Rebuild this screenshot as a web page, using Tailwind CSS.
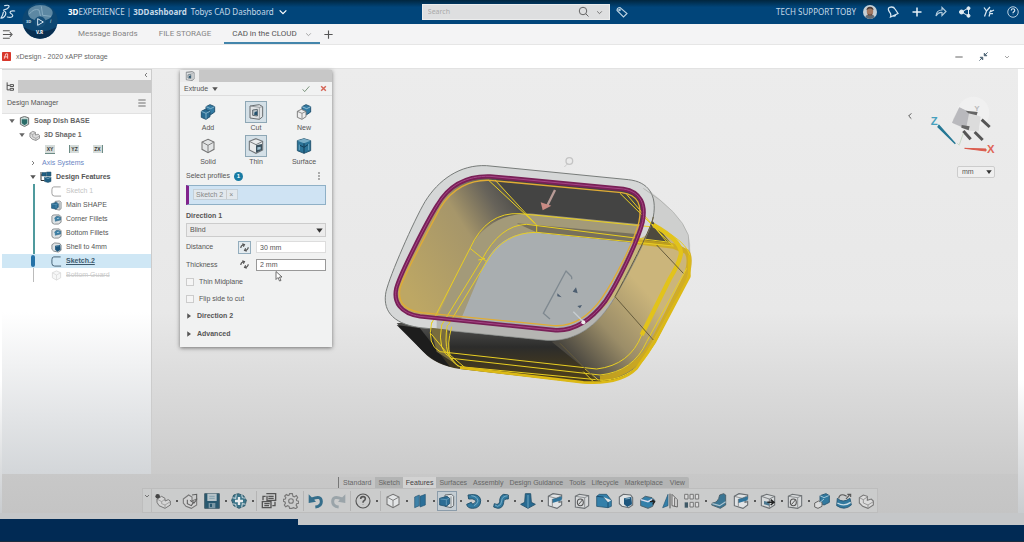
<!DOCTYPE html>
<html lang="en">
<head>
  <meta charset="UTF-8" />
  <meta name="viewport" content="width=device-width, initial-scale=1.0"/>
  <title>3DDashboard - CAD in the CLOUD</title>
  <script src="https://cdn.jsdelivr.net/npm/@tailwindcss/browser@4"></script>
</head>
<body class="min-h-screen flex flex-col overflow-hidden bg-white font-['Liberation_Sans',Arial,sans-serif] text-[7px] leading-[10px] text-[#555]">

  <!-- Icon sprite -->
  <svg class="hidden" fill="none" stroke-linejoin="round" stroke-linecap="round">
    <symbol id="cube" viewBox="0 0 24 24"><path d="M12 2l9 4v11l-9 5-9-5V6z" fill="#e3e5e6" stroke="#777" stroke-width="1.6"/><path d="M3 6l9 5 9-5M12 11v11" stroke="#777" stroke-width="1.4"/></symbol>
    <symbol id="cube-blue" viewBox="0 0 24 24"><path d="M12 1l10 3v15l-10 4-10-4V4z" fill="#2b7397" stroke="#23536e" stroke-width="1.4"/><path d="M2 4l10 4 10-4-10-3z" fill="#79aec7"/><path d="M12 8v15M12 14l-6-3M12 14l6-4" stroke="#123e58" stroke-width="1.5"/><path d="M5 10v8M19 9v9" stroke="#6aa5c1" stroke-width="1.5"/></symbol>
    <symbol id="add" viewBox="0 0 24 24"><path d="M9 4l6-3 7 3v8l-6 4-7-3z" fill="#327ba3" stroke="#1f4f6d" stroke-width="1.4"/><path d="M2 11l6-3 7 3v8l-6 4-7-3z" fill="#286b92" stroke="#1f4f6d" stroke-width="1.4"/><path d="M2 11l7 3 6-3M9 14v8M9 4l7 3 6-3" stroke="#8dbad0" stroke-width="1.3"/></symbol>
    <symbol id="cut" viewBox="0 0 24 24"><path d="M3 3l14-2 5 3v15l-5 4-14-2z" fill="#e0e3e5" stroke="#686d70" stroke-width="1.5"/><path d="M17 5v18M17 5l5-1M17 5L3 3" stroke="#888d90" stroke-width="1.2"/><path d="M7 9l7-1v10l-7-1z" fill="#b9c4ca" stroke="#4f5a60" stroke-width="1.3"/><path d="M10 12l4-1v6l-5-1z" fill="#24526f"/></symbol>
    <symbol id="new" viewBox="0 0 24 24"><path d="M9 4l6-3 7 3v8l-6 4-7-3z" fill="#327ba3" stroke="#1f4f6d" stroke-width="1.4"/><path d="M9 4l7 3 6-3" stroke="#b1d2e2" stroke-width="1.2"/><path d="M2 11l6-3 7 3v8l-6 4-7-3z" fill="#eee" stroke="#777" stroke-width="1.4"/><path d="M2 11l7 3 6-3M9 14v8" stroke="#777" stroke-width="1.2"/></symbol>
    <symbol id="thin" viewBox="0 0 24 24"><path d="M12 1l10 4v13l-10 5-10-5V5z" fill="#e8eaeb" stroke="#707477" stroke-width="1.6"/><path d="M2 5l10 5 10-5" stroke="#707477" stroke-width="1.4"/><path d="M12 11l9-2v9l-9 4z" fill="#3b515e"/><path d="M14 14l5-1v4l-5 1z" fill="#9fc0d0"/></symbol>
    <symbol id="fillet" viewBox="0 0 24 24"><path d="M2 5q1-3 5-3h11l4 4v12l-6 4H7q-5-1-5-5z" fill="#dfe2e4" stroke="#666c70" stroke-width="1.6"/><path d="M8 9q2-5 8-4l5 2v6l-12 3z" fill="#3b7fa6" stroke="#285875"/><path d="M8 10v11M13 10l5-1" stroke="#d5e7ef" stroke-width="1.5"/></symbol>
    <symbol id="shell" viewBox="0 0 24 24"><path d="M2 6l6-4 11 1 3 4v11l-6 4-10-2-4-4z" fill="#dfe3e5" stroke="#666c70" stroke-width="1.6"/><path d="M9 8l11-2 1 11-7 4-5-4z" fill="#1d567d"/><path d="M11 9l7-1" stroke="#81adc4" stroke-width="1.5"/></symbol>
    <symbol id="extrude" viewBox="0 0 24 24"><path d="M9 3l10-1 3 3v14l-4 3-9-2z" fill="#dfe3e5" stroke="#666c70" stroke-width="1.5"/><path d="M18 5v16" stroke="#666c70"/><path d="M1 8l11-3 4 3v8l-5 4-10-2z" fill="#2b6d95" stroke="#204f6c" stroke-width="1.2"/><path d="M2 9l9 1 4-2M11 10v8" stroke="#79abc5"/></symbol>
    <symbol id="sketch" viewBox="0 0 24 24"><path d="M21 2H6Q2 2 2 8v8q0 6 6 6h14" stroke="currentColor" stroke-width="2"/></symbol>
    <symbol id="part" viewBox="0 0 24 24"><path d="M2 7l6-4 6 2v6l6-2 3 3v6l-8 5-8-3-5-5z" fill="#dcdcdc" stroke="#777" stroke-width="1.6"/><path d="M2 7l6 3 6-4M8 10v5l7 3 8-5M15 18v4" stroke="#888" stroke-width="1.2"/></symbol>
    <symbol id="part-new" viewBox="0 0 24 24"><path d="M3 9l7-4 5 3v4l5-2 3 2v6l-8 5-9-4-3-5z" fill="#d5d5d5" stroke="#777" stroke-width="1.5"/><path d="M3 9l7 4 5-4M10 13v3l5 2 8-5M15 18v4" stroke="#888"/><circle cx="4" cy="5" r="3.4" fill="#444"/></symbol>
    <symbol id="part-open" viewBox="0 0 24 24"><path d="M2 9l8-6 5 3v6l7-3v9l-8 5-8-3-4-5z" fill="#d3d3d3" stroke="#777" stroke-width="1.6"/><path d="M15 3l7-1v8l-4 5-6-4M8 10v6l6 3 4-6" stroke="#5f5f5f" stroke-width="1.6"/></symbol>
    <symbol id="save" viewBox="0 0 24 24"><path d="M1 1h22v22H1z" fill="#28586f" stroke="#46606d" stroke-width="1.5"/><path d="M5 1h14v11H5z" fill="#b7c3c8"/><path d="M8 5h8M8 8h8" stroke="#6890a2"/><path d="M7 15h10v8H7z" fill="#7996a4"/><path d="M9 16h3v5H9z" fill="#28586f"/></symbol>
    <symbol id="update" viewBox="0 0 24 24"><path d="M4 3l7-2 8 3 4 7-2 8-9 4-8-4-3-8z" fill="#3b7488" stroke="#315a6b" stroke-width="1.4"/><path d="M12 6v12M6 12h12" stroke="#e5eaec" stroke-width="3.5"/><path d="M2 7l5 1 1-6M22 8l-5-1-1-5M22 17l-5-1-1 6M2 16l5 1 1 5" stroke="#c5d2d8" stroke-width="1.6"/></symbol>
    <symbol id="swap" viewBox="0 0 24 24"><path d="M8 1h14v10H9V4M2 13h13v9H2z" stroke="#555" stroke-width="2"/><path d="M11 5h8M11 8h8M5 16h8M5 19h7M3 11V5h4M21 13v6h-4" stroke="#555" stroke-width="2"/></symbol>
    <symbol id="gear" viewBox="0 0 24 24"><path d="M10 1h4l1 4 2 .800 3-2 2 3-2 3 .500 1.700 3 1v3l-3 .700-.800 2 1.800 3-2.500 2.300-3-1.600-2 .800L13 23h-3l-1-3-2-.900-3 1.700L2 18l1.700-2.700L3 13.500l-2.500-1V9.500L3.500 9l.8-2L2.500 4.500 5 2.300l2.500 1.600L9.300 3z" stroke="#777" stroke-width="1.700"/><circle cx="12" cy="12" r="3.500" stroke="#777" stroke-width="1.600"/></symbol>
    <symbol id="undo" viewBox="0 0 24 24"><path d="M6 9q14-6 14 4 0 7-9 8" stroke="currentColor" stroke-width="4.500" stroke-linecap="butt"/><path d="M1 2l0 13 11-2z" fill="currentColor"/></symbol>
    <symbol id="help" viewBox="0 0 24 24"><circle cx="12" cy="12" r="10.500" stroke="currentColor" stroke-width="1.700"/><path d="M8.500 9q0-3.500 3.500-3.500t3.500 3.200q0 2-2 3-1.500.8-1.500 2.800M12 17.500v.6" stroke="currentColor" stroke-width="2.400"/></symbol>
    <symbol id="plane" viewBox="0 0 24 24"><path d="M4 6l7-3v16l-7 3z" fill="#3f82a8" stroke="#285875"/><path d="M12 5l8-3v16l-8 3z" fill="#2b6f98" stroke="#285875"/></symbol>
    <symbol id="revolve" viewBox="0 0 24 24"><path d="M3 3q18-3 19 8 0 12-12 12-8 0-9-6l7-3q1 4 4 2 5-4 1-6-3-2-9-1z" fill="#31799f" stroke="#204f69" stroke-width="1.400"/><path d="M8 4q9 1 10 8-1 5-6 7" stroke="#83b4cb" stroke-width="1.300"/></symbol>
    <symbol id="sweep" viewBox="0 0 24 24"><path d="M2 16q7 3 8-3 0-9 6-11l7 1v6q-7-1-7 5-1 9-9 9l-6-2z" fill="#31799f" stroke="#204f69" stroke-width="1.400"/><path d="M3 18l4 2q6-2 6-8 0-7 9-8" stroke="#83b4cb" stroke-width="1.200"/></symbol>
    <symbol id="loft" viewBox="0 0 24 24"><path d="M8 1h8l1 13 6 3-11 6-11-6 6-3z" fill="#286b92" stroke="#204f69" stroke-width="1.300"/><path d="M12 3v19" stroke="#5c98b6" stroke-width="2"/></symbol>
    <symbol id="cutout" viewBox="0 0 24 24"><path d="M2 5l7-4 13 2v5l-4 3v3l4-1v5l-7 5-13-4z" fill="#e0e3e5" stroke="#666c70" stroke-width="1.600"/><path d="M8 9l14-4v6l-14 4z" fill="#2e749c"/><path d="M2 5l12 3 8-4M8 9v11" stroke="#666"/></symbol>
    <symbol id="hole" viewBox="0 0 24 24"><path d="M2 5l6-3 14 2v15l-6 4-14-2z" fill="#d7d9da" stroke="#6d7174" stroke-width="1.600"/><path d="M2 5l14 2v15M16 7l6-3" stroke="#6d7174"/><ellipse cx="9.500" cy="14" rx="4.500" ry="5" stroke="#555" stroke-width="1.600"/><path d="M7 17l6-7" stroke="#555" stroke-width="1.500"/></symbol>
    <symbol id="chamfer" viewBox="0 0 24 24"><path d="M1 5l4-3h11l7 9v9l-5 2-17-2z" fill="#3480aa" stroke="#275672" stroke-width="1.200"/><path d="M1 5l10 1 7 8v8" stroke="#18486a" stroke-width="1.400"/><path d="M11 6l12 5-5 3z" fill="#e0e5e8"/></symbol>
    <symbol id="draft" viewBox="0 0 24 24"><path d="M1 10l7-5 10 2 4 4-3 9-7 3-11-4z" fill="#3480aa" stroke="#4b5c66" stroke-width="1.400"/><path d="M1 10l11 3 7-4" stroke="#dde" stroke-width="2"/><path d="M15 13h6m-3-3l4 3-3 4" stroke="#222" stroke-width="2"/></symbol>
    <symbol id="arrow-cube" viewBox="0 0 24 24"><path d="M2 5l8-3 12 3v13l-8 5-12-4z" fill="#d7dadb" stroke="#6d7174" stroke-width="1.600"/><path d="M2 5l12 4 8-4M14 9v13" stroke="#6d7174" stroke-width="1.300"/><path d="M6 12l8 2v5l-8-2z" fill="#4c7890"/><path d="M11 14h9m-4-4l5 4-5 4" stroke="#222" stroke-width="2.200"/></symbol>
    <symbol id="mirror" viewBox="0 0 24 24"><path d="M9 2v17l-8 3z" fill="#3480aa" stroke="#285875"/><path d="M12 1v22" stroke="#555" stroke-width="1.500"/><path d="M15 2l8 8v11l-8-2zM19 7v13" fill="#ddd" stroke="#666" stroke-width="1.500"/></symbol>
    <symbol id="pattern" viewBox="0 0 24 24"><path d="M1 2h5v7H1zM9 2h5v7H9zM17 2h5v7h-5zM9 14h5v7H9zM17 14h5v7h-5z" fill="#ddd" stroke="#777" stroke-width="1.500"/><path d="M1 14h5v8H1z" fill="#3f5967"/></symbol>
    <symbol id="rib" viewBox="0 0 24 24"><path d="M13 3l6-2 3 2v15l-8 5-13-5 1-3q9 0 11-12z" fill="#3a7593" stroke="#49606c" stroke-width="1.400"/><path d="M2 16l11 3 9-6" stroke="#adc4cf" stroke-width="1.800"/></symbol>
    <symbol id="scale" viewBox="0 0 24 24"><path d="M9 4l9-3 5 3v10l-8 4-6-3z" fill="#31799f" stroke="#275672" stroke-width="1.400"/><path d="M1 15l6-3 5 2v6l-6 3-5-2z" fill="#ddd" stroke="#666" stroke-width="1.500"/><path d="M9 4l6 3 7-3M8 15l7-6" stroke="#9fc4d5" stroke-width="1.500"/></symbol>
    <symbol id="deform" viewBox="0 0 24 24"><path d="M2 8q8 8 19 0l2 10q-10 9-22 1z" fill="#31799f" stroke="#275672" stroke-width="1.300"/><path d="M2 15q10 6 20-1" stroke="#c8dce5" stroke-width="2"/><path d="M4 8q1-7 8-5l4 2M15 9l6-7M17 2h5v4" stroke="#555" stroke-width="1.700"/></symbol>
    <symbol id="flip" viewBox="0 0 24 24"><path d="M2 13q0-6 8-9M6 2l6 2-3 6M22 11q0 6-8 9M18 22l-6-2 3-6" stroke="#555" stroke-width="3"/></symbol>
    <symbol id="chevron" viewBox="0 0 24 24"><path d="M4 8l8 8 8-8" stroke="currentColor" stroke-width="3"/></symbol>
    <symbol id="tri" viewBox="0 0 24 24"><path d="M1 5h22l-11 15z" fill="currentColor"/></symbol>
  </svg>

  <!-- Top bar -->
  <header class="relative z-10 h-6 shrink-0 flex items-center bg-linear-to-b from-[#01263f] via-[#01457a] via-30% to-[#01457a] text-[#c6d9e8] font-['Noto_Sans',sans-serif]">
    <svg class="absolute left-0 top-1 w-4 h-4" viewBox="0 0 48 48" fill="none" stroke="#d7e6f1" stroke-width="3.500" stroke-linecap="round"><path d="M14 5q17-4 12 5-4 6-15 8M11 20q12 5 2 18-4 5-10 4 6-9 7-17M44 21q-13-2-14 4 0 3 6 6 5 4-1 8-4 2-13 0"/></svg>
    <button aria-label="Compass" class="absolute left-[22px] top-[3px] w-9 h-9">
      <svg class="w-9 h-9" viewBox="0 0 108 108"><circle cx="54" cy="54" r="53" fill="#0d4772"/><path d="M5 72q49 28 98 0-14 35-49 35T5 72z" fill="#092f51"/><ellipse cx="55" cy="30" rx="37" ry="24" fill="#5d88a3"/><path d="M22 33q14-18 29-12l5 20-10 14M58 10l4 27 25 3" stroke="#86abc1" stroke-width="3" fill="none"/><circle cx="54" cy="57" r="17" fill="#164f79"/><path d="M47 47v20l17-10z" fill="#164f79" stroke="#d7e6f1" stroke-width="3"/><text x="12" y="60" font-size="12" font-weight="bold" fill="#cfe0ec">3D</text><text x="84" y="60" font-size="14" fill="#cfe0ec" font-style="italic">i</text><text x="42" y="94" font-size="14" font-weight="bold" fill="#fff">V.R</text></svg>
    </button>
    <div class="ml-[68px] flex items-center text-[8px] whitespace-pre"><b class="text-white">3D</b><span>EXPERIENCE | </span><b>3DDashboard</b><span class="ml-1">Tobys CAD Dashboard</span></div>
    <svg class="ml-1 w-[10px] h-[10px] text-white" fill="none"><use href="#chevron"/></svg>
    <form class="absolute left-[41%] w-[188px] h-4 ml-[2px] flex items-center bg-[#dedfe0] border border-[#eceded]">
      <input type="text" aria-label="Search" placeholder="Search" class="flex-1 min-w-0 px-[5px] text-[7px] placeholder:text-[#aaa] outline-none" />
      <button type="button" aria-label="Run search"><svg class="w-3 h-3" viewBox="0 0 24 24" fill="none" stroke="#666" stroke-width="2"><circle cx="10" cy="10" r="7.500"/><path d="M15.500 15.500L21 21"/></svg></button>
      <svg class="w-[7px] h-[7px] mx-[6px] text-[#666]" fill="none"><use href="#chevron"/></svg>
    </form>
    <svg class="absolute left-[60%] ml-[2px] w-3 h-3" viewBox="0 0 24 24" fill="none" stroke="#bcd3e2" stroke-width="2.200"><path d="M2 9q0-6 6-6l14 12-7 7z"/><circle cx="7" cy="8" r="1.500"/></svg>
    <div class="ml-auto flex items-center pr-[5px]">
      <span class="text-[8px] mr-[7px] font-['Noto_Sans']">TECH SUPPORT TOBY</span>
      <svg class="w-[14px] h-[14px] mr-[10px]" viewBox="0 0 24 24"><circle cx="12" cy="12" r="12" fill="#c5cfd5"/><path d="M4 21q1-5 8-5t8 5q-8 6-16 0z" fill="#616b75"/><ellipse cx="12" cy="11" rx="5.500" ry="7" fill="#a17862"/><path d="M6 9q0-6 6-6t6 6q-3-3-6-3T6 9z" fill="#4e3d38"/><path d="M8 14q4 5 8 0l-1 4H9z" fill="#63483d"/></svg>
      <div class="flex items-center gap-3">
        <button aria-label="Notifications"><svg class="w-3 h-3" viewBox="0 0 24 24" fill="none" stroke="#d7e6f1" stroke-width="2.500"><path d="M4 3q9-3 12 3l6 9-15 7q2-6-2-10-4-5-1-9zM13 21l5-2"/></svg></button>
        <button aria-label="Add"><svg class="w-3 h-3" viewBox="0 0 24 24" stroke="#e8f1f7" stroke-width="3"><path d="M12 3v18M3 12h18"/></svg></button>
        <button aria-label="Share"><svg class="w-3 h-3" viewBox="0 0 24 24" fill="none" stroke="#b3ccdd" stroke-width="2.300"><path d="M2 20q1-12 12-12V3l8 8-8 8v-6Q7 12 2 20z"/></svg></button>
        <button aria-label="Collaborate"><svg class="w-3 h-3" viewBox="0 0 24 24" fill="#e3edf4" stroke="#e3edf4" stroke-width="2"><path d="M5 12L19 4M5 12l14 8M19 4v16"/><circle cx="5" cy="12" r="4"/><circle cx="19" cy="4.500" r="3"/><circle cx="19" cy="19.500" r="3"/></svg></button>
        <button aria-label="Tools"><svg class="w-3 h-3" viewBox="0 0 24 24" fill="none" stroke="#d7e6f1" stroke-width="2.500"><path d="M2 3l5 7 7-8M7 10L3 21M12 21l4-13M12 13l10-5M15 15h5"/></svg></button>
        <button aria-label="Help"><svg class="w-3 h-3 text-[#d7e6f1]" fill="none"><use href="#help"/></svg></button>
      </div>
    </div>
  </header>

  <!-- Dashboard tabs -->
  <nav class="h-[21px] shrink-0 flex items-stretch bg-[#f4f4f5] border-b border-[#e6e6e6] font-[Roboto] text-[8px] text-[#858585]">
    <button aria-label="Open menu" class="w-[70px] pl-[2px] text-left"><svg class="w-[11px] h-[11px]" viewBox="0 0 24 24" fill="none" stroke="#555" stroke-width="2.300"><path d="M2 4h15M2 12h18M2 20h15M17 7l5 5-5 5"/></svg></button>
    <div class="flex gap-[5px]">
      <a href="#" class="flex items-center px-2 border-y-2 border-transparent">Message Boards</a>
      <a href="#" class="flex items-center px-2 border-y-2 border-transparent">FILE STORAGE</a>
      <a href="#" class="flex items-center px-2 border-y-2 border-t-transparent border-b-[#4385ab] text-[#555]">CAD in the CLOUD<svg class="w-[7px] h-[7px] ml-[8px] text-[#999]" fill="none"><use href="#chevron"/></svg></a>
    </div>
    <button aria-label="New tab" class="ml-[4px]"><svg class="w-[9px] h-[9px]" viewBox="0 0 24 24" stroke="#555" stroke-width="3"><path d="M12 1v22M1 12h22"/></svg></button>
  </nav>

  <!-- Widget title -->
  <div class="h-6 shrink-0 flex items-center px-[2px] bg-white border-b border-[#e2e2e2]">
    <svg class="w-[9px] h-[9px]" viewBox="0 0 24 24"><rect width="24" height="24" rx="2" fill="#d8372b"/><path d="M6 18L10 5h5v13M5 13h11" stroke="#fbd2cd" stroke-width="2.500" fill="none"/></svg>
    <h1 class="ml-[5px] text-[#666]">xDesign - 2020 xAPP storage</h1>
    <div class="ml-auto mr-3 flex items-center gap-4 text-[#888]">
      <button aria-label="Minimize"><svg class="w-2 h-2" viewBox="0 0 24 24" stroke="#666" stroke-width="3"><path d="M1 12h22"/></svg></button>
      <button aria-label="Restore"><svg class="w-[9px] h-[9px]" viewBox="0 0 24 24" stroke="#4c6273" stroke-width="2.500" fill="#4c6273"><path d="M23 1l-7 7M14 3v7h7zM1 23l7-7M3 14h7v7z"/></svg></button>
      <button aria-label="Widget menu"><svg class="w-[6px] h-[6px]" fill="none"><use href="#chevron"/></svg></button>
    </div>
  </div>

  <div class="flex-1 flex flex-col pl-[2px] pr-[6px] bg-linear-to-b from-white from-70% to-[#c9cccf]">
    <div class="flex-1 flex">

      <!-- Design Manager -->
      <aside class="w-[150px] shrink-0 flex flex-col border-r border-[#ccc] bg-linear-to-b from-white from-60% to-[#d3d6d9]">
        <div class="h-[11px] flex items-center justify-end pr-[2px] bg-[#f3f3f3] border-t border-[#d5d5d5]"><button aria-label="Collapse panel"><svg class="w-[6px] h-[6px] rotate-90" fill="none"><use href="#chevron"/></svg></button></div>
        <div class="h-[13px] flex bg-[#c9c9c9]"><div class="w-4 flex items-center justify-center bg-[#efefef]"><svg class="w-[9px] h-[9px]" viewBox="0 0 24 24" fill="none" stroke="#444" stroke-width="2.500"><path d="M3 1v20h7M3 9h7M11 7h9v5h-9zM11 17h9v5h-9z"/></svg></div></div>
        <div class="h-[21px] flex items-center justify-between px-[5px] bg-[#f0f0f0] border-b border-[#e2e2e2]">
          <h2>Design Manager</h2>
          <button aria-label="Menu"><svg class="w-2 h-2" viewBox="0 0 24 24" stroke="#555" stroke-width="2.500"><path d="M1 3h22M1 12h22M1 21h22"/></svg></button>
        </div>
        <ul class="[&_li>div]:h-[14px] [&_li>div]:flex [&_li>div]:items-center">
          <li><div class="pl-[7px] gap-[4px] font-bold text-[#666]"><svg class="w-[6px] h-[6px]"><use href="#tri"/></svg><svg class="w-[11px] h-[11px]" viewBox="0 0 24 24"><path d="M3 4l9-3 9 3v14l-9 5-9-5z" fill="#c6d8d5" stroke="#666" stroke-width="2"/><path d="M6 7h12v9l-6 4-6-4z" fill="#2a6c68"/></svg>Soap Dish BASE</div></li>
          <li><div class="pl-[17px] gap-[4px] font-bold text-[#666]"><svg class="w-[6px] h-[6px]"><use href="#tri"/></svg><svg class="w-[11px] h-[11px]" fill="none"><use href="#part"/></svg>3D Shape 1</div></li>
          <li><div class="pl-[43px] gap-[14px] text-[5px] font-bold text-[#333]"><span class="w-[10px] text-center leading-[8px] bg-[#d5dcda] border-b border-[#6c8b85]">XY</span><span class="w-[10px] text-center leading-[8px] bg-[#d5dcda] border-l border-[#6c8b85]">YZ</span><span class="w-[10px] text-center leading-[8px] bg-[#d5dcda] border-r border-[#6c8b85]">ZX</span></div></li>
          <li><div class="pl-[28px] gap-[6px] text-[#6b86c4]"><svg class="w-[6px] h-[6px] -rotate-90 text-[#555]" fill="none"><use href="#chevron"/></svg>Axis Systems</div></li>
          <li>
            <div class="pl-[28px] gap-[4px] font-bold text-[#555]"><svg class="w-[6px] h-[6px]"><use href="#tri"/></svg><svg class="w-[12px] h-[12px]" viewBox="0 0 24 24"><path d="M2 2v17h7M2 8h8" stroke="#333" stroke-width="2" fill="none"/><path d="M4 3h8v7H4zM13 2h9v8h-9zM9 12h13v9l-6 2-7-2z" fill="#1f5f84" stroke="#244c63"/><path d="M9 12l7 3 6-3" stroke="#8ab4c9" stroke-width="1.500" fill="none"/></svg>Design Features</div>
            <ul class="relative">
              <li class="absolute left-[31px] top-0 h-[98px] w-px bg-[#bbb]"><span class="block h-[77px] w-[2px] bg-[#4f9a9d]"></span></li>
              <li><div class="pl-[49px] gap-[4px] text-[#c4c4c4]"><svg class="w-[11px] h-[11px] text-[#999]" fill="none"><use href="#sketch"/></svg>Sketch 1</div></li>
              <li><div class="pl-[49px] gap-[4px]"><svg class="w-[11px] h-[11px]" fill="none"><use href="#extrude"/></svg>Main SHAPE</div></li>
              <li><div class="pl-[49px] gap-[4px]"><svg class="w-[11px] h-[11px]" fill="none"><use href="#fillet"/></svg>Corner Fillets</div></li>
              <li><div class="pl-[49px] gap-[4px]"><svg class="w-[11px] h-[11px]" fill="none"><use href="#fillet"/></svg>Bottom Fillets</div></li>
              <li><div class="pl-[49px] gap-[4px]"><svg class="w-[11px] h-[11px]" fill="none"><use href="#shell"/></svg>Shell to 4mm</div></li>
              <li class="relative"><div class="pl-[29px] bg-[#cfe7f5] font-bold text-[#3c5a6e]"><span class="w-[4px] h-3 mr-4 rounded-sm bg-[#2472a8]"></span><svg class="w-[11px] h-[11px] mr-[4px]" fill="none"><use href="#sketch"/></svg><u>Sketch.2</u></div></li>
              <li><div class="pl-[49px] gap-[4px] text-[#ccc] line-through"><svg class="w-[11px] h-[11px] opacity-30" fill="none"><use href="#cube"/></svg>Bottom Guard</div></li>
            </ul>
          </li>
        </ul>
      </aside>

      <!-- 3D view -->
      <main class="relative flex-1 bg-linear-to-b from-[#ececec] via-[#e8e8e8] via-60% to-[#cbcbcb]">

        <svg class="absolute left-[218px] top-[76px] w-[340px] h-[250px]" viewBox="0 0 1020 750" fill="none" stroke-linejoin="round">
          <defs>
            <linearGradient id="leftWall" x1="100" y1="420" x2="480" y2="180" gradientUnits="userSpaceOnUse"><stop offset="0" stop-color="#bda764"/><stop offset=".55" stop-color="#a6966a"/><stop offset=".8" stop-color="#67635a"/><stop offset="1" stop-color="#454545"/></linearGradient>
            <linearGradient id="rightWall" x1="600" y1="630" x2="820" y2="430" gradientUnits="userSpaceOnUse"><stop offset="0" stop-color="#4a4740"/><stop offset=".45" stop-color="#9b8d68"/><stop offset="1" stop-color="#cbb57b"/></linearGradient>
            <linearGradient id="front" x1="0" y1="550" x2="0" y2="690" gradientUnits="userSpaceOnUse"><stop offset="0" stop-color="#4b4b49"/><stop offset=".4" stop-color="#2c2c2b"/><stop offset="1" stop-color="#4a3d1c"/></linearGradient>
            <clipPath id="opening"><path d="M75 430C85 390 170 230 200 180 235 120 290 90 360 92L760 130C815 138 830 180 820 230 805 290 740 420 705 470 655 535 600 560 550 555L150 514C90 505 68 470 75 430Z"/></clipPath>
          </defs>
          <!-- outer body -->
          <path d="M80 535L160 620Q195 660 270 672L640 714Q740 722 800 670L860 560 700 400 400 500Z" fill="url(#front)"/>
          <path d="M545 590L680 700Q760 715 810 655L945 415Q980 320 940 245L845 200 735 455Q660 570 545 590Z" fill="url(#rightWall)"/>
          <path d="M800 108Q900 180 940 240 965 280 960 320L930 300 845 235Z" fill="#cecfce"/>
          <path d="M750 145L845 225 910 303 800 290 830 200Z" fill="#4e4a3e"/>
          <!-- rim -->
          <path d="M48 440C60 390 130 230 165 170 205 105 270 58 350 62L775 104C835 110 862 150 850 215 845 250 780 380 735 455 680 550 610 590 530 586L150 548C60 535 38 490 48 440Z" fill="#d5d7d7" stroke="#777b79" stroke-width="3"/>
          <path d="M200 520L550 560Q640 560 690 490L735 455Q660 590 530 586L200 553Z" fill="#a9aaa5" opacity=".75"/>
          <!-- inside -->
          <g clip-path="url(#opening)">
            <path d="M50 60h800v550H50z" fill="url(#leftWall)"/>
            <path d="M360 80L860 120 810 300 490 240Z" fill="#444443"/>
            <path d="M490 206L830 240 800 290 485 262Q380 280 340 370L270 530 195 530 300 310Q360 200 490 206Z" fill="#a39a79"/>
            <path d="M440 235L830 270 800 300 500 262Z" fill="#77705c"/>
            <path d="M490 262L790 293 700 480 600 560 272 525 335 375Q380 265 490 262Z" fill="#a9aeb0"/>
          </g>
          <path d="M790 292L830 270 735 455 690 500Z" fill="#c7b67c"/>
          <path d="M80 540L150 550 240 665Q190 650 160 620Z" fill="#1d1d1d"/>
          <path d="M182 548L235 554 240 640 270 665 200 620Z" fill="#776b3e"/>
          <!-- preview edges -->
          <path d="M800 290L910 303 950 320Q965 340 950 390L860 570Q800 690 690 700" stroke="#d1ab18" stroke-width="16" opacity=".85"/>
          <g stroke="#e9cf22" stroke-width="3">
            <path d="M355 105L500 240V262M375 105L495 235M750 145L910 303M770 148L890 290"/>
            <path d="M185 535L300 310Q350 200 450 206L840 245M215 540L335 345Q390 240 470 238L900 292M235 540L350 350Q400 262 500 262L910 303M200 520L240 530"/>
            <path d="M185 532Q170 600 210 620L680 672Q780 660 815 570L930 350M215 540Q200 620 245 640L690 690Q790 680 830 590L950 370M232 540Q215 640 270 665L700 706Q800 700 850 600L960 390M245 545Q230 600 240 630L285 668M182 565L265 665"/>
            <path d="M645 672L685 705M640 680L670 710M300 310L350 350M325 345L345 340M840 235Q960 290 960 340"/>
            <path d="M270 668L640 712Q750 720 800 670L855 590 958 395V330" stroke="#dcb915" stroke-width="8"/>
            <path d="M850 240Q940 290 932 330 925 360 900 400L815 570" stroke="#e2c31b" stroke-width="13"/>
          </g>
          <path d="M735 455L850 585M860 300L940 385M570 595L680 705M850 215Q845 250 735 455" stroke="#665c3c" stroke-width="3"/>
          <path d="M820 130Q930 200 955 270L958 320" stroke="#a3a4a2" stroke-width="2"/>
          <path d="M90 430C100 395 175 255 210 190 245 132 300 103 360 106L755 143C805 150 817 180 807 230 795 285 730 410 695 460 650 523 600 545 550 542L155 503C100 495 83 468 90 430Z" stroke="#e0ac35" stroke-width="4"/>
          <path d="M79 430C89 390 170 230 202 180 237 120 290 92 360 94L760 132C813 140 828 180 818 230 803 290 740 420 705 470 655 535 600 560 550 555L150 514C90 505 70 470 79 430Z" stroke="#792057" stroke-width="13"/>
          <path d="M79 430C89 390 170 230 202 180 237 120 290 92 360 94L760 132C813 140 828 180 818 230 803 290 740 420 705 470 655 535 600 560 550 555L150 514C90 505 70 470 79 430Z" stroke="#a54686" stroke-width="3"/>
          <!-- drag handles -->
          <path d="M555 135L530 185" stroke="#b79b96" stroke-width="7"/><path d="M512 172l32 10-26 14z" fill="#c98a83"/>
          <path d="M583 66l10-10" stroke="#ccc" stroke-width="3"/><circle cx="598" cy="48" r="10" stroke="#c4c4c4" stroke-width="4"/>
          <path d="M605 395L588 378 520 505 540 522M605 395V403" stroke="#7f8990" stroke-width="4"/>
          <path d="M608 440l10-13 5 18zM562 445l13 12-13-3zM622 483l14-3-6 10z" fill="#4d5e70"/>
          <path d="M610 500l30 30" stroke="#c7cdd0" stroke-width="4"/><circle cx="640" cy="532" r="6" fill="#eee"/>
        </svg>

        <!-- Extrude dialog -->
        <section class="absolute left-7 top-px w-[152px] bg-[#f1f2f2] shadow-[0_1px_4px_rgba(0,0,0,0.5)]">
          <div class="h-3 flex bg-[#c7c7c7]"><div class="w-[19px] flex items-center justify-center bg-[#ececec]"><svg class="w-[10px] h-[10px]" fill="none"><use href="#cut"/></svg></div></div>
          <div class="h-[14px] flex items-center px-1 border-b border-[#ddd]">
            <h2>Extrude</h2><svg class="w-[6px] h-[6px] ml-[4px]"><use href="#tri"/></svg>
            <button aria-label="Accept" class="ml-auto"><svg class="w-2 h-2" viewBox="0 0 24 24" fill="none" stroke="#7c957e" stroke-width="3"><path d="M2 13l6 7L22 4"/></svg></button>
            <button aria-label="Cancel" class="ml-[10px] mr-px"><svg class="w-[7px] h-[7px]" viewBox="0 0 24 24" stroke="#d56557" stroke-width="5"><path d="M4 4l16 16M20 4L4 20"/></svg></button>
          </div>
          <div class="grid grid-cols-3 gap-y-[2px] px-1 pt-[5px]">
            <button class="flex flex-col items-center"><span class="w-[22px] h-[22px] flex items-center justify-center"><svg class="w-4 h-4" fill="none"><use href="#add"/></svg></span>Add</button>
            <button class="flex flex-col items-center"><span class="w-[22px] h-[22px] flex items-center justify-center border border-[#8ea7b5] bg-[#d4e0e7]"><svg class="w-4 h-4" fill="none"><use href="#cut"/></svg></span>Cut</button>
            <button class="flex flex-col items-center"><span class="w-[22px] h-[22px] flex items-center justify-center"><svg class="w-4 h-4" fill="none"><use href="#new"/></svg></span>New</button>
            <button class="flex flex-col items-center"><span class="w-[22px] h-[22px] flex items-center justify-center"><svg class="w-4 h-4" fill="none"><use href="#cube"/></svg></span>Solid</button>
            <button class="flex flex-col items-center"><span class="w-[22px] h-[22px] flex items-center justify-center border border-[#8ea7b5] bg-[#d4e0e7]"><svg class="w-4 h-4" fill="none"><use href="#thin"/></svg></span>Thin</button>
            <button class="flex flex-col items-center"><span class="w-[22px] h-[22px] flex items-center justify-center"><svg class="w-4 h-4" fill="none"><use href="#cube-blue"/></svg></span>Surface</button>
          </div>
          <div class="px-[6px] pb-[4px]">
            <div class="h-[18px] flex items-center">Select profiles<span class="ml-1 w-[9px] h-[9px] rounded-full bg-[#187ba3] text-white text-center text-[6px] leading-[9px] font-bold">1</span>
              <button aria-label="More" class="ml-auto mr-[3px]"><svg class="w-2 h-2" viewBox="0 0 24 24" fill="#555"><circle cx="12" cy="3" r="2.500"/><circle cx="12" cy="12" r="2.500"/><circle cx="12" cy="21" r="2.500"/></svg></button></div>
            <div class="h-5 pl-[4px] pt-[3px] border border-l-[3px] border-[#8fb0c6] border-l-[#82238d] bg-[#cfe3f3] text-[#888]"><span class="inline-flex gap-[3px] px-[2px] bg-[#e2e8ed] border border-[#c5d0d8] leading-[9px]">Sketch 2<button aria-label="Remove Sketch 2" class="border-l border-[#ccc] px-[2px]">×</button></span></div>
            <h3 class="mt-[5px] leading-[12px] font-bold">Direction 1</h3>
            <div class="relative mt-px"><select aria-label="End condition" class="block w-full h-[14px] pl-[3px] appearance-none border border-[#ccc] bg-[#ececec]"><option>Blind</option></select><svg class="absolute right-[3px] top-[4px] w-[7px] h-[7px] pointer-events-none text-[#333]"><use href="#tri"/></svg></div>
            <div class="h-[18px] flex items-center mt-px"><label for="distance" class="w-[52px]">Distance</label><button aria-label="Reverse direction" class="w-[13px] h-[13px] flex items-center justify-center border border-[#93adbd] bg-[#e5ecf0]"><svg class="w-[9px] h-[9px]" fill="none"><use href="#flip"/></svg></button><input id="distance" type="text" value="30 mm" class="ml-[5px] flex-1 min-w-0 h-3 px-[3px] bg-white border border-[#ddd]" /></div>
            <div class="h-[17px] flex items-center"><label for="thickness" class="w-[52px]">Thickness</label><button aria-label="Reverse thickness" class="w-[13px] h-[13px] flex items-center justify-center"><svg class="w-[9px] h-[9px]" fill="none"><use href="#flip"/></svg></button><input id="thickness" type="text" value="2 mm" class="ml-[5px] flex-1 min-w-0 h-3 px-[3px] bg-white border border-[#999]" /></div>
            <label class="h-[17px] flex items-center gap-[5px]"><input type="checkbox" class="appearance-none w-2 h-2 border border-[#ccc] bg-[#f5f5f5]" />Thin Midplane</label>
            <label class="h-[17px] flex items-center gap-[5px]"><input type="checkbox" class="appearance-none w-2 h-2 border border-[#ccc] bg-[#f5f5f5]" />Flip side to cut</label>
            <button class="h-[18px] w-full flex items-center gap-[5px] font-bold"><svg class="w-[6px] h-[6px] -rotate-90"><use href="#tri"/></svg>Direction 2</button>
            <button class="h-[18px] w-full flex items-center gap-[5px] font-bold"><svg class="w-[6px] h-[6px] -rotate-90"><use href="#tri"/></svg>Advanced</button>
          </div>
        </section>
        <svg class="absolute left-[123px] top-[202px] w-[8px] h-[11px]" viewBox="0 0 16 22"><path d="M2 1v16l4-4 3 7 3-1-3-7h5z" fill="#fff" stroke="#444" stroke-width="1.500"/></svg>

        <!-- View cube and units -->
        <button aria-label="Show side panel" class="absolute right-[104px] top-[43px] w-[8px] h-[8px]"><svg class="w-[8px] h-[8px] rotate-90" fill="none"><use href="#chevron"/></svg></button>
        <svg class="absolute right-0 top-[11px] w-32 h-[110px]" viewBox="0 0 384 330" font-family="Liberation Sans" font-weight="bold">
          <circle cx="250" cy="98" r="48" fill="#f0f0f0"/>
          <path d="M220 153l22 25M254 156l24 24M275 119l24 22" stroke="#555" stroke-width="9"/>
          <path d="M208 82l25 13 39 15-6 44-28-2-50-22 1-12z" fill="#dcdcdc"/>
          <path d="M208 82l30 14-10 50-42-18z" fill="#b9b9bd"/>
          <path d="M227 92l36 4-3 10-25-6zM215 135l24 4-3 12-22-8z" fill="#666"/>
          <text x="253" y="92" font-size="24" fill="#bbb">Y</text>
          <path d="M220 160l-12 34M208 196l-6-6" stroke="#c9d7c6" stroke-width="3"/>
          <path d="M147 136l49 55-52-50z" fill="#267895" stroke="#267895" stroke-width="4"/>
          <path d="M224 205l64 2v6z" fill="#db5a4c" stroke="#db5a4c" stroke-width="3"/>
          <text x="122" y="134" font-size="34" fill="#47a0bd">Z</text>
          <text x="291" y="220" font-size="34" fill="#df6558">X</text>
        </svg>
        <div class="absolute right-[23px] top-[97px]"><select aria-label="Units" class="block w-[38px] h-3 pl-1 appearance-none rounded-xs border border-[#ccc] bg-[#efefef]"><option>mm</option></select><svg class="absolute right-[3px] top-[3px] w-[6px] h-[6px] pointer-events-none text-[#333]"><use href="#tri"/></svg></div>
      </main>
    </div>

    <!-- Action bar -->
    <div class="shrink-0 pt-[3px] pl-[140px] bg-linear-to-b from-[#c8c8c8] to-[#c4c4c4]">
      <div role="tablist" class="ml-[196px] w-max h-[11px] flex bg-[#b3b4b4] border-l border-[#777] text-[#666] rounded-tr-xs">
        <button class="px-[4px] bg-[#c5c5c5]">Standard</button>
        <button class="px-[3px]">Sketch</button>
        <button class="px-[3px] bg-[#d2d2d2] text-[#444]">Features</button>
        <button class="px-[3px]">Surfaces</button>
        <button class="px-[3px]">Assembly</button>
        <button class="px-[3px]">Design Guidance</button>
        <button class="px-[3px]">Tools</button>
        <button class="px-[3px]">Lifecycle</button>
        <button class="px-[3px]">Marketplace</button>
        <button class="px-[4px]">View</button>
      </div>
      <div id="toolbar" class="h-[25px] w-max flex items-center bg-[#cbcccc] border border-[#bdbdbd]">
        <button aria-label="Collapse toolbar" class="w-[9px] h-full flex items-start justify-center pt-1 border-r border-[#bbb]"><svg class="w-[6px] h-[6px]" fill="none"><use href="#chevron"/></svg></button>
      </div>
    </div>
  </div>

  <!-- Desktop edge -->
  <footer class="h-[29px] shrink-0 flex items-end bg-[#c5c7c9]">
    <div class="w-[298px] h-[23px] bg-[#012a54] border-b border-[#1b2c3f]"></div>
    <div class="flex-1 h-[17px] bg-[#012a54] border-b border-[#1b2c3f]"></div>
  </footer>

  <script>
    // "*" = has a drop-down dot, "|" = separator
    const tools = ["part-new*", "part-open", "save*", "update*", "|", "swap", "gear", "|", "undo", "redo", "|", "help*", "|",
      "cube*", "plane*", "extrude*", "revolve*", "sweep*", "loft*", "cutout*", "hole", "chamfer", "shell", "draft", "mirror",
      "pattern*", "rib", "cutout*", "arrow-cube*", "hole*", "scale", "deform", "part"];
    const toolbar = document.getElementById("toolbar");

    tools.forEach((tool) => {
      if (tool === "|") {
        toolbar.insertAdjacentHTML("beforeend", '<span class="w-px h-5 mx-px bg-[#b5b5b5]"></span>');
        return;
      }
      const name = tool.replace("*", "");
      const icon = name === "redo" ? "undo" : name;
      let color = "text-[#555]";
      if (name === "undo") color = "text-[#356e8b]";
      if (name === "redo") color = "text-[#9aa4a9] -scale-x-100";
      const box = name === "extrude" ? "border border-[#8b9caa] bg-[#c4cdd3]" : "";
      toolbar.insertAdjacentHTML("beforeend",
        `<button aria-label="${name}" class="w-[22px] h-5 flex items-center justify-center"><span class="w-5 h-5 flex items-center justify-center ${box}"><svg class="w-4 h-4 ${color}" fill="none"><use href="#${icon}"/></svg></span></button>`);
      if (tool.endsWith("*")) {
        toolbar.insertAdjacentHTML("beforeend", '<span class="w-[5px] flex justify-center"><i class="w-[2px] h-[2px] rounded-full bg-[#333]"></i></span>');
      }
    });
  </script>

</body>
</html>
